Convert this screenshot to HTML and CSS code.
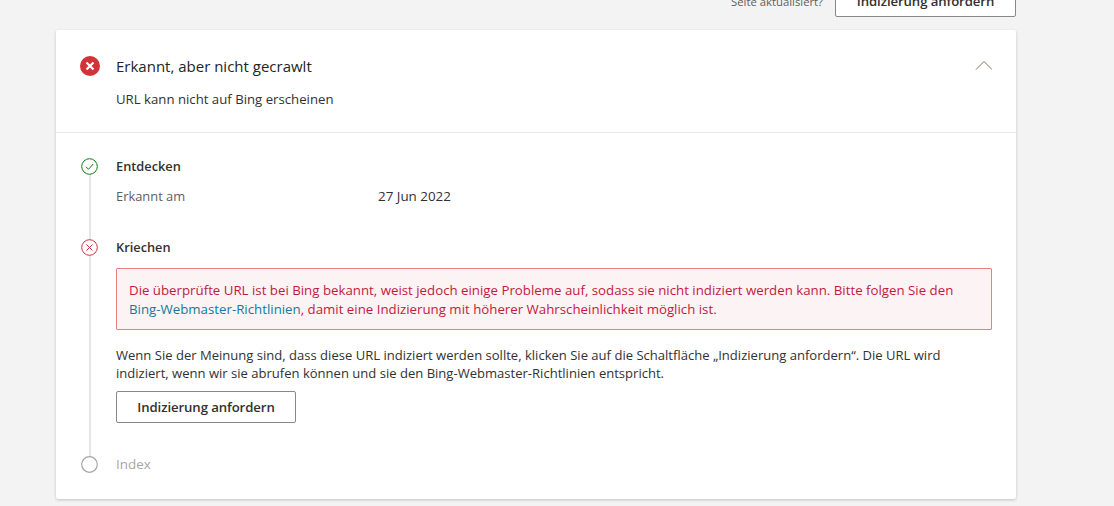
FILE: index.html
```html
<!DOCTYPE html>
<html lang="de">
<head>
    <meta charset="UTF-8">
    <meta name="viewport" content="width=device-width, initial-scale=1.0">
    <title>URL-Prüfung</title>
    <link rel="stylesheet" href="styles.css">
</head>
<body>
    <div class="top-row">
        <span class="top-label">Seite aktualisiert?</span>
        <button class="btn btn-top">Indizierung anfordern</button>
    </div>

    <div class="card">
        <div class="card-head">
            <div class="head-title">
                <svg class="head-icon" width="20" height="20" viewBox="0 0 20 20">
                    <circle cx="10" cy="10" r="10" fill="#d13438"/>
                    <path d="M6.5 6.5l7 7M13.5 6.5l-7 7" stroke="#fff" stroke-width="2.2" fill="none"/>
                </svg>
                <h2>Erkannt, aber nicht gecrawlt</h2>
                <svg class="chevron" width="18" height="10" viewBox="0 0 18 10">
                    <path d="M2 8.5l8-8 8 8" stroke="#80705c" stroke-width="1" fill="none"/>
                </svg>
            </div>
            <p class="head-sub">URL kann nicht auf Bing erscheinen</p>
        </div>

        <div class="steps">
            <div class="step step-discover">
                <svg class="step-icon" width="17" height="17" viewBox="0 0 17 17">
                    <circle cx="8.5" cy="8.5" r="7.8" fill="#fff" stroke="#107c10" stroke-width="1"/>
                    <path d="M5 8.8l2.5 2.5L12.2 6" stroke="#107c10" stroke-width="1" fill="none"/>
                </svg>
                <h3>Entdecken</h3>
                <div class="info-row">
                    <span class="info-key">Erkannt am</span>
                    <span class="info-value">27 Jun 2022</span>
                </div>
            </div>

            <div class="step step-crawl">
                <svg class="step-icon" width="17" height="17" viewBox="0 0 17 17">
                    <circle cx="8.5" cy="8.5" r="7.8" fill="#fff" stroke="#d13438" stroke-width="1"/>
                    <path d="M5.5 5.5l6 6M11.5 5.5l-6 6" stroke="#d13438" stroke-width="1" fill="none"/>
                </svg>
                <h3>Kriechen</h3>
                <div class="alert">
                    Die überprüfte URL ist bei Bing bekannt, weist jedoch einige Probleme auf, sodass sie nicht indiziert werden kann. Bitte folgen Sie den <a href="#">Bing-Webmaster-Richtlinien</a>, damit eine Indizierung mit höherer Wahrscheinlichkeit möglich ist.
                </div>
                <p class="note">Wenn Sie der Meinung sind, dass diese URL indiziert werden sollte, klicken Sie auf die Schaltfläche „Indizierung anfordern“. Die URL wird indiziert, wenn wir sie abrufen können und sie den Bing-Webmaster-Richtlinien entspricht.</p>
                <button class="btn">Indizierung anfordern</button>
            </div>

            <div class="step step-index">
                <svg class="step-icon" width="17" height="17" viewBox="0 0 17 17">
                    <circle cx="8.5" cy="8.5" r="7.8" fill="#fff" stroke="#a6a6a6" stroke-width="1.2"/>
                </svg>
                <h3>Index</h3>
            </div>
        </div>
    </div>
</body>
</html>
```

FILE: styles.css
```css
* {
    box-sizing: border-box;
}
body {
    margin: 0;
    height: 506px;
    overflow: hidden;
    background: #f3f3f3;
    color: #323130;
    font-family: 'Open Sans', 'Noto Sans', sans-serif;
    font-size: 13.2px;
    line-height: 19px;
}
.top-row {
    display: flex;
    justify-content: flex-end;
    align-items: center;
    gap: 12px;
    margin: -15px 98px 13px 0;
}
.top-label {
    color: #605e5c;
    font-size: 11.3px;
}
.btn {
    display: block;
    width: 180px;
    height: 32px;
    padding: 0;
    background: #fff;
    border: 1px solid #8a8886;
    border-radius: 2px;
    color: #323130;
    font-family: inherit;
    font-size: 13.2px;
    font-weight: 600;
    letter-spacing: -0.1px;
}
.btn-top {
    width: 181px;
}
.card {
    width: 960px;
    height: 469px;
    margin-left: 56px;
    background: #fff;
    border-radius: 2px;
    box-shadow: 0 1px 3px rgba(0, 0, 0, 0.2);
}
.card-head {
    height: 103px;
    padding: 24px 24px 0;
    border-bottom: 1px solid #e8e8e8;
}
.head-title {
    display: flex;
    align-items: center;
}
.head-icon {
    flex: none;
    margin-right: 16px;
}
.head-title h2 {
    flex: 1;
    margin: 0;
    font-size: 15px;
    font-weight: 400;
    line-height: 24px;
    color: #252423;
}
.head-sub {
    margin: 12px 0 0 36px;
}
.steps {
    padding: 24px 24px 0 25px;
}
.step {
    position: relative;
    padding-left: 35px;
}
.step-icon {
    position: absolute;
    left: 0;
    top: 1px;
    z-index: 1;
}
.step:not(:last-child)::before {
    content: "";
    position: absolute;
    left: 7.5px;
    top: 10px;
    bottom: -10px;
    width: 2px;
    background: #e6e6e6;
}
.step h3 {
    margin: 0;
    font-size: 12.8px;
    font-weight: 600;
    line-height: 19px;
}
.step-discover {
    height: 81px;
}
.step-crawl {
    height: 217px;
}
.step.step-index h3 {
    font-size: 13.4px;
    font-weight: 400;
    color: #a6a6a6;
}
.info-row {
    display: flex;
    margin-top: 11px;
}
.info-key {
    width: 262px;
    color: #605e5c;
    font-size: 12.9px;
}
.info-value {
    font-size: 13.4px;
}
.alert {
    margin-top: 11px;
    height: 62px;
    padding: 12px 12px;
    background: #fcf3f4;
    border: 1px solid #e98086;
    border-radius: 1px;
    color: #c4193f;
    font-size: 13.27px;
}
.alert a {
    color: #0f7c9c;
    text-decoration: none;
}
.note {
    margin: 16px 0 9px;
    font-size: 13.05px;
    line-height: 18px;
}
```
